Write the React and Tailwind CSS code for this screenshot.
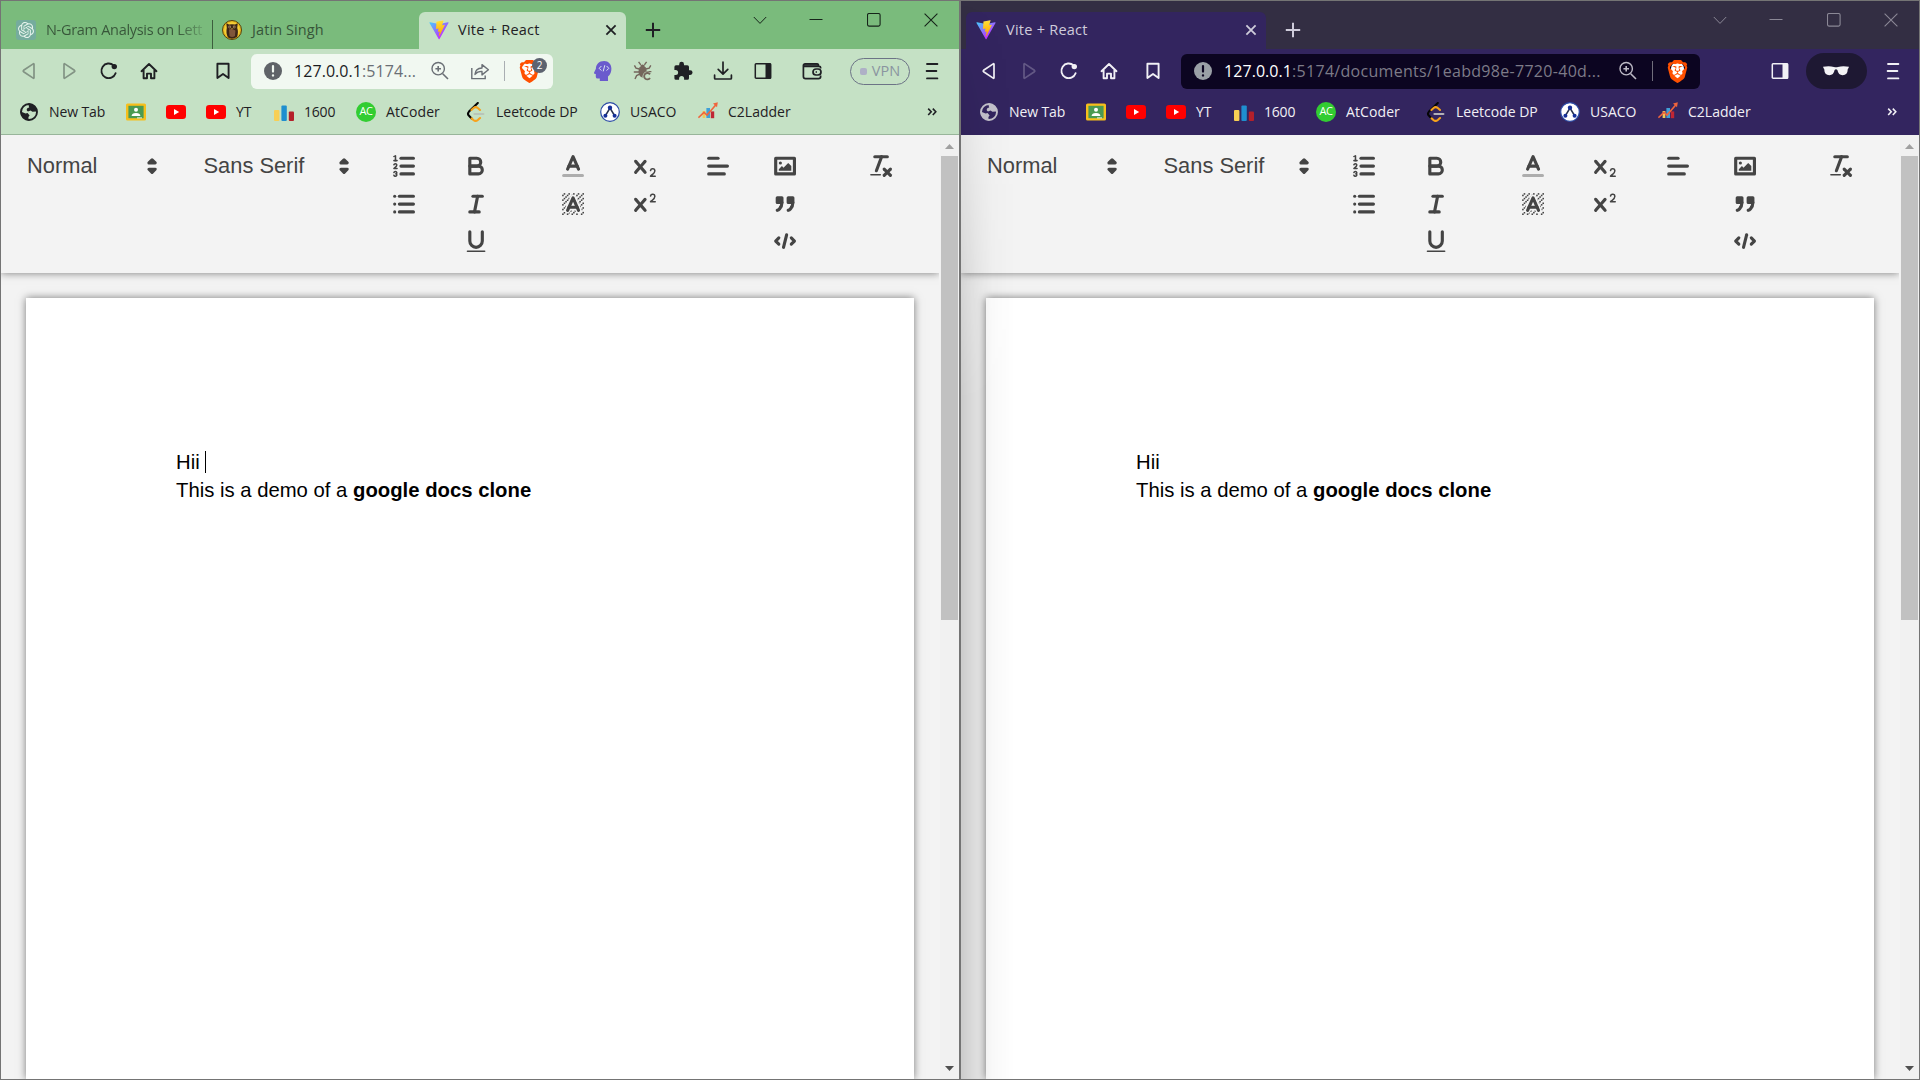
import React from "react";
import { SiOpenai, SiBrave } from "react-icons/si";

const UI = "font-['Open_Sans','Noto_Sans',sans-serif]";

/* ---------- browser chrome icons ---------- */

const Svg = ({ size = 20, vb = "0 0 20 20", children, className = "" }) => (
  <svg width={size} height={size} viewBox={vb} fill="none" className={"shrink-0 " + className}>
    {children}
  </svg>
);

const OpenAI = () => (
  <span className="flex size-5 shrink-0 items-center justify-center rounded-[3px] bg-[#75ac9d] text-[#e6f3ec]">
    <SiOpenai size={16} />
  </span>
);

const Owl = () => (
  <Svg>
    <circle cx="10" cy="10" r="9.5" fill="#e9b91c" stroke="#54400f" />
    <circle cx="10" cy="10" r="7.8" fill="#f6cf3b" />
    <path d="M4.3 3.2L7 4.6Q10 3.8 13 4.6L15.8 3.2L15.2 8Q16.8 12 15 17Q10 20 6 17.5Q3.6 13 4.8 8Z" fill="#3c2517" />
    <path d="M7 9.5Q10 8 13.4 10.5L13 16Q10 18 7.5 16Z" fill="#80563a" />
    <circle cx="7.7" cy="7" r="1.4" fill="#a8865f" />
    <circle cx="12.2" cy="7" r="1.4" fill="#a8865f" />
    <circle cx="7.7" cy="7" r=".6" fill="#120a06" />
    <circle cx="12.2" cy="7" r=".6" fill="#120a06" />
    <path d="M9.3 8L10 9.6L10.7 8Z" fill="#e2b33a" />
  </Svg>
);

const Vite = () => (
  <Svg vb="0 0 410 404">
    <defs>
      <linearGradient id="va" x1="6" y1="33" x2="235" y2="344" gradientUnits="userSpaceOnUse">
        <stop stopColor="#41D1FF" />
        <stop offset="1" stopColor="#BD34FE" />
      </linearGradient>
      <linearGradient id="vb" x1="194.65" y1="8.82" x2="236.08" y2="292.99" gradientUnits="userSpaceOnUse">
        <stop stopColor="#FFEA83" />
        <stop offset=".083" stopColor="#FFDD35" />
        <stop offset="1" stopColor="#FFA800" />
      </linearGradient>
    </defs>
    <path d="M399.641 59.5246L215.643 388.545C211.844 395.338 202.084 395.378 198.228 388.618L10.5817 59.5563C6.38087 52.1896 12.6802 43.2665 21.0281 44.7586L205.223 77.6824C206.398 77.8924 207.601 77.8904 208.776 77.6763L389.119 44.8058C397.439 43.2894 403.768 52.1434 399.641 59.5246Z" fill="url(#va)" />
    <path d="M292.965 1.5744L156.801 28.2552C154.563 28.6937 152.906 30.5903 152.771 32.8664L144.395 174.33C144.198 177.662 147.258 180.248 150.51 179.498L188.42 170.749C191.967 169.931 195.172 173.055 194.443 176.622L183.18 231.775C182.422 235.487 185.907 238.661 189.532 237.56L212.947 230.446C216.577 229.344 220.065 232.527 219.297 236.242L201.398 322.875C200.278 328.294 207.486 331.249 210.492 326.603L212.5 323.5L323.454 102.072C325.312 98.3645 322.108 94.137 318.036 94.9228L279.014 102.454C275.347 103.161 272.227 99.746 273.262 96.1583L298.731 7.86689C299.767 4.27314 296.636 0.855181 292.965 1.5744Z" fill="url(#vb)" />
  </Svg>
);

const Back = ({ dim }) => (
  <Svg className={dim ? "opacity-40" : ""}>
    <path d="M15 3.2V16.8Q15 17.6 14.2 17.1L4.6 10.7Q3.8 10 4.6 9.3L14.2 2.9Q15 2.4 15 3.2Z" stroke="currentColor" strokeWidth="1.7" strokeLinejoin="round" />
  </Svg>
);
const Forward = ({ faint }) => (
  <Svg className={"rotate-180 " + (faint ? "opacity-25" : "opacity-40")}>
    <path d="M15 3.2V16.8Q15 17.6 14.2 17.1L4.6 10.7Q3.8 10 4.6 9.3L14.2 2.9Q15 2.4 15 3.2Z" stroke="currentColor" strokeWidth="1.7" strokeLinejoin="round" />
  </Svg>
);
const Reload = () => (
  <Svg>
    <path d="M14.6 4.4A7.3 7.3 0 1 0 16.6 12.2" stroke="currentColor" strokeWidth="1.9" strokeLinecap="round" />
    <circle cx="15.3" cy="5.6" r="2.7" fill="currentColor" />
  </Svg>
);
const Home = () => (
  <Svg>
    <path d="M2.5 10.2L10 3L17.5 10.2M4.6 9V17.2H8V12.6H12V17.2H15.4V9" stroke="currentColor" strokeWidth="1.9" strokeLinecap="round" strokeLinejoin="round" />
  </Svg>
);
const Mark = () => (
  <Svg>
    <path d="M4.4 2.8H15.6V17L10 12.9L4.4 17Z" stroke="currentColor" strokeWidth="1.9" strokeLinejoin="round" />
  </Svg>
);
const Info = ({ a, b }) => (
  <Svg size={18} vb="0 0 18 18">
    <circle cx="9" cy="9" r="9" className={a} />
    <path d="M9 4V9.6" className={b} strokeWidth="2.2" strokeLinecap="round" />
    <circle cx="9" cy="13.4" r=".6" className={b} strokeWidth="1.2" />
  </Svg>
);
const ZoomIn = () => (
  <Svg>
    <path d="M12.7 12.7L18 18M8.2 4.9V10.5M5.4 7.7H11" stroke="currentColor" strokeWidth="1.6" />
    <circle cx="8.2" cy="7.7" r="6.2" stroke="currentColor" strokeWidth="1.4" />
  </Svg>
);
const Share = () => (
  <Svg>
    <path d="M1.8 7V17.6H15.2V14.5" stroke="currentColor" strokeWidth="1.4" />
    <path d="M5 13.4Q5.4 7.4 12 7V3.6L18.4 8.8L12 13.9V10.4Q7.6 10.2 5 13.4Z" stroke="currentColor" strokeWidth="1.4" strokeLinejoin="round" />
  </Svg>
);
const Brave = () => (
  <span className="flex h-[23px] w-5 shrink-0 items-center justify-center">
    <span className="flex h-[18px] w-[13px] items-center justify-center rounded-full bg-white">
      <SiBrave size={23} className="shrink-0 text-[#ff5000]" />
    </span>
  </span>
);
const Head = () => (
  <Svg>
    <path d="M11.2 0C6 0 2.9 3.4 2.9 7.8L1 11.8Q.8 12.6 1.6 12.8L2.8 13V16Q3 17.6 4.6 17.6H6.8V20H15V15.4Q18.4 12.6 18.4 7.7C18.4 3.2 15.4 0 11.2 0Z" fill="#6a5acd" />
    <path d="M8.4 5L6.2 7.3L8.4 9.6M13.6 5L15.8 7.3L13.6 9.6M11.8 4.2L10.2 10.4" stroke="#d9e4ef" strokeWidth="1" />
  </Svg>
);
const Bug = () => (
  <Svg>
    <ellipse cx="9.6" cy="10.6" rx="4.1" ry="6" fill="#74665c" />
    <path d="M7 5Q9.6 1.8 12.2 5Z" fill="#74665c" />
    <path d="M5.6 .8L7.8 3.8M13.6 .8L11.4 3.8M1.4 4.4L3 7.2L6.4 8M17.8 4.4L16.2 7.2L12.8 8M.8 11H6M18.4 10.6H13M2 18L3.6 14.6L6.6 13.2" stroke="#74665c" strokeWidth="1.4" />
    <circle cx="14.2" cy="15.2" r="4.6" fill="#c5e1c5" />
    <path d="M17 13.4A3.2 3.2 0 1 0 17 17" stroke="#74665c" strokeWidth="1.9" />
  </Svg>
);
const Puzzle = () => (
  <Svg>
    <path d="M17.2 9.2H16V6Q16 4.3 14.3 4.3H11V3.2A2.4 2.4 0 0 0 6.2 3.2V4.3H3Q1.4 4.3 1.4 6V9.1H2.6A2.5 2.5 0 0 1 2.6 14.1H1.4V17.2Q1.4 18.8 3 18.8H6.1V17.6A2.5 2.5 0 0 1 11.1 17.6V18.8H14.3Q16 18.8 16 17.2V13.9H17.2A2.35 2.35 0 0 0 17.2 9.2Z" fill="currentColor" />
  </Svg>
);
const Download = () => (
  <Svg>
    <path d="M10 1.2V13M5.2 8.4L10 13.2L14.8 8.4M1.6 14.2V17.2Q1.6 18 2.4 18H17.6Q18.4 18 18.4 17.2V14.2" stroke="currentColor" strokeWidth="1.7" strokeLinecap="round" strokeLinejoin="round" />
  </Svg>
);
const Panel = () => (
  <Svg size={18} vb="0 0 18 18">
    <rect x="1.3" y="1.8" width="15.4" height="14.4" rx=".8" stroke="currentColor" strokeWidth="1.5" />
    <path d="M11.5 1.5H17V16.5H11.5Z" fill="currentColor" />
  </Svg>
);
const Wallet = () => (
  <Svg>
    <path d="M1.2 4.5Q1.2 2.6 3 2.6H14.6Q16.5 2.6 16.8 5H1.2Z" fill="currentColor" opacity=".75" />
    <path d="M18.6 7.6V6.6Q18.6 5.4 17.2 5.4H2.8Q1.4 5.4 1.4 4.2V15.4Q1.4 17.6 3.6 17.6H16.4Q18.6 17.6 18.6 15.8V14.6M1.4 4.6Q1.4 2.8 3.4 2.8H15Q16.6 2.8 16.6 5" stroke="currentColor" strokeWidth="1.7" />
    <rect x="11" y="8" width="8" height="6" rx="3" stroke="currentColor" strokeWidth="1.7" />
    <path d="M13.6 11H15" stroke="currentColor" strokeWidth="1.4" />
  </Svg>
);
const Menu = () => (
  <Svg>
    <path d="M5 3H15.4M4.6 10H14.4M5 17.4H15.4" stroke="currentColor" strokeWidth="1.8" strokeLinecap="round" />
  </Svg>
);
const Glasses = () => (
  <svg width="26" height="10" viewBox="0 0 26 10" className="shrink-0">
    <path d="M0 .8Q6-.2 11 .9Q13 1.5 15 .9Q20-.2 26 .8L25.4 2.2L24.8 3Q24.6 9.2 19.6 9.2Q15.4 9.2 14.4 4Q13 2.4 11.6 4Q10.6 9.2 6.4 9.2Q1.4 9.2 1.2 3L.6 2.2Z" fill="#f4f3f6" />
  </svg>
);

/* ---------- bookmark icons ---------- */

const Globe = () => (
  <Svg>
    <circle cx="10" cy="10" r="8" stroke="currentColor" strokeWidth="1.9" />
    <path d="M10 1.6Q16 2 18 7.4L17 9.4L13.4 9.8L11.6 8.4L9 9.6Q6.6 8 8.6 6L10.2 5.6L9.6 3.4ZM1.6 9.4L6.6 11.4L8.6 11L10.6 13.4L9.4 15L9.6 18.4Q3 17.6 1.6 11Z" fill="currentColor" />
  </Svg>
);
const Classroom = () => (
  <Svg>
    <rect y="1.4" width="20" height="17.2" rx="1.6" fill="#f6bf1c" />
    <rect x="2.4" y="3.8" width="15.2" height="12.4" fill="#4b9a52" />
    <circle cx="10" cy="7.8" r="2" fill="#fff" />
    <path d="M5.6 14Q5.8 11 10 11Q14.2 11 14.4 14Z" fill="#fff" />
    <path d="M11 15.4H16V16.4H11Z" fill="#e9f2ea" />
  </Svg>
);
const YouTube = () => (
  <Svg>
    <rect y="3" width="20" height="14" rx="3.2" fill="#f00" />
    <path d="M8 7L13.2 10L8 13Z" fill="#fff" />
  </Svg>
);
const Bars = () => (
  <Svg className="overflow-visible">
    <rect x="0" y="8" width="5.4" height="11" rx="1" fill="#f8cf54" />
    <rect x="7.4" y="3.4" width="5.4" height="15.6" rx="1" fill="#1f8fcf" />
    <rect x="14.8" y="9.6" width="5.2" height="9.4" rx="1" fill="#b4202a" />
  </Svg>
);
const AtCoderIcon = () => (
  <span className="flex size-5 shrink-0 items-center justify-center rounded-full bg-[#32cd32] text-[11px] tracking-[-0.5px] text-white">AC</span>
);
const Leet = ({ bar }) => (
  <Svg>
    <path d="M11.8 1L3 9.6Q1 11.8 3 13.8L5.6 16.4" stroke="#050505" strokeWidth="2.1" strokeLinecap="round" />
    <path d="M5.6 16.4L7.4 18Q9.6 19.8 11.8 18L14 16" stroke="#f7a21b" strokeWidth="2.1" strokeLinecap="round" />
    <path d="M5.4 8L7.6 6Q9.6 4.4 11.8 6L14 8" stroke="#f7a21b" strokeWidth="2.1" strokeLinecap="round" />
    <path d="M8.4 12H17.4" className={bar} strokeWidth="2.1" strokeLinecap="round" />
  </Svg>
);
const Usaco = () => (
  <Svg>
    <circle cx="10" cy="10" r="9.3" fill="#fff" stroke="#2b4ba6" strokeWidth="1.2" />
    <path d="M5.2 14L10 6L14.8 14" stroke="#27324f" strokeWidth="1.5" />
    <circle cx="10" cy="5.8" r="2.2" fill="#15309a" />
    <circle cx="5.4" cy="13.8" r="2" fill="#15309a" />
    <circle cx="14.6" cy="13.8" r="2" fill="#15309a" />
  </Svg>
);
const C2 = () => (
  <Svg>
    <rect x="4.6" y="9" width="2.8" height="7" fill="#efc85a" />
    <rect x="8.4" y="6" width="3.6" height="10" fill="#3fa0d8" />
    <rect x="12.8" y="9.4" width="3.4" height="6.8" fill="#c02634" />
    <path d="M.4 15.6L6 10.4L9 13L18.6 2" stroke="#f0643c" strokeWidth="1.6" />
    <path d="M15 1.6L19.8.2L19 5.2Z" fill="#f0643c" />
  </Svg>
);

const Cell = ({ children, className = "" }) => (
  <button className={"flex h-9 w-10 shrink-0 items-center justify-center " + className}>{children}</button>
);

const BM = ({ w, icon, label, t = "" }) => (
  <div className={"flex shrink-0 items-center gap-2.5 whitespace-nowrap " + w}>
    {icon}
    {label && <span className={t}>{label}</span>}
  </div>
);

function Bookmarks({ dark }) {
  return (
    <div className="flex h-[45px] shrink-0 items-center pl-[18px] text-[14px]">
      <BM w="w-[107px]" icon={<span className={dark ? "text-[#c3c1cb]" : "text-[#1f2024]"}><Globe /></span>} label="New Tab" t="tracking-[-0.1px]" />
      <BM w="w-10" icon={<Classroom />} />
      <BM w="w-10" icon={<YouTube />} />
      <BM w="w-[68px]" icon={<YouTube />} label="YT" />
      <BM w="w-[82px]" icon={<Bars />} label="1600" t="tracking-[-0.2px]" />
      <BM w="w-[110px]" icon={<AtCoderIcon />} label="AtCoder" t="tracking-[0.1px]" />
      <BM w="w-[134px]" icon={<Leet bar={dark ? "stroke-[#b3b1b8]" : "stroke-[#b9c4b9]"} />} label="Leetcode DP" />
      <BM w="w-[98px]" icon={<Usaco />} label="USACO" />
      <BM w="w-[200px]" icon={<C2 />} label="C2Ladder" />
      <Svg size={12} vb="0 0 12 12" className="ml-[28px]">
        <path d="M2.2 2.6L5.2 5.8L2.2 9M6.8 2.6L9.8 5.8L6.8 9" stroke="currentColor" strokeWidth="1.6" />
      </Svg>
    </div>
  );
}

const TabClose = () => (
  <Svg size={12} vb="0 0 12 12">
    <path d="M1.4 1.4L10.6 10.6M10.6 1.4L1.4 10.6" stroke="currentColor" strokeWidth="1.8" />
  </Svg>
);
const Plus = () => (
  <Svg size={16} vb="0 0 16 16" className="mt-[10px] self-center">
    <path d="M8 .8V15.2M.8 8H15.2" stroke="currentColor" strokeWidth="2" />
  </Svg>
);

const Controls = ({ tone }) => (
  <div className={"mr-[21px] ml-auto flex h-[38px] items-center " + tone}>
    <Svg size={14} vb="0 0 14 14" className="mr-[42px]"><path d="M.8 4L7 10.4L13.2 4" stroke="currentColor" /></Svg>
    <Svg size={14} vb="0 0 14 14" className="mr-[44px]"><path d="M.5 6.5H13.5" stroke="currentColor" /></Svg>
    <Svg size={14} vb="0 0 14 14" className="mr-[43px]"><rect x=".5" y=".5" width="12.6" height="12.6" rx="1.6" stroke="currentColor" strokeWidth="1.1" /></Svg>
    <Svg size={14} vb="0 0 14 14"><path d="M.6 .6L13.4 13.4M13.4 .6L.6 13.4" stroke="currentColor" strokeWidth="1.1" /></Svg>
  </div>
);

/* ---------- editor toolbar icons, 18-unit grid ---------- */

const Q = ({ children }) => (
  <svg viewBox="0 0 18 18" className="block size-[28.125px] fill-none stroke-[#444] stroke-2" strokeLinecap="round" strokeLinejoin="round">
    {children}
  </svg>
);
const F = { fill: "#444", stroke: "none" };
const L = ({ p, ...r }) => <line x1={p[0]} y1={p[1]} x2={p[2]} y2={p[3]} {...r} />;

const Ordered = () => (
  <Q>
    <L p={[7, 4, 15, 4]} /><L p={[7, 9, 15, 9]} /><L p={[7, 14, 15, 14]} />
    <L p={[2.5, 5.5, 4.5, 5.5]} className="stroke-1" />
    <path style={F} d="M3.5,6A0.5,0.5,0,0,1,3,5.5V3.085l-0.276.138A0.5,0.5,0,0,1,2.053,3c-0.124-.247-0.023-0.324.224-0.447l1-.5A0.5,0.5,0,0,1,4,2.5v3A0.5,0.5,0,0,1,3.5,6Z" />
    <path className="stroke-1" d="M4.5,10.5h-2c0-.234,1.85-1.076,1.85-2.234A0.959,0.959,0,0,0,2.5,8.156" />
    <path className="stroke-1" d="M2.5,14.846a0.959,0.959,0,0,0,1.85-.109A0.7,0.7,0,0,0,3.75,14a0.688,0.688,0,0,0,.6-0.736,0.959,0.959,0,0,0-1.85-.109" />
  </Q>
);
const Bullet = () => (
  <Q>
    {[4, 9, 14].map((y) => (
      <g key={y}><L p={[6, y, 15, y]} /><L p={[3, y, 3, y]} /></g>
    ))}
  </Q>
);
const Bold = () => (
  <Q>
    <path d="M5,4H9.5A2.5,2.5,0,0,1,12,6.5v0A2.5,2.5,0,0,1,9.5,9H5V4Z" />
    <path d="M5,9h5.5A2.5,2.5,0,0,1,13,11.5v0A2.5,2.5,0,0,1,10.5,14H5V9Z" />
  </Q>
);
const Italic = () => <Q><L p={[7, 4, 13, 4]} /><L p={[5, 14, 11, 14]} /><L p={[8, 14, 10, 4]} /></Q>;
const Underline = () => (
  <Q>
    <path d="M5,3V9a4.012,4.012,0,0,0,4,4H9a4.012,4.012,0,0,0,4-4V3" />
    <rect style={F} height="1" rx=".5" width="12" x="3" y="15" />
  </Q>
);
const Color = () => (
  <Q>
    <L p={[3, 15, 15, 15]} opacity=".4" />
    <polyline points="5.5 11 9 3 12.5 11" />
    <L p={[11.63, 9, 6.38, 9]} />
  </Q>
);
const dots = [[4, 4], [2, 6], [3, 5], [4, 7], [2, 12], [2, 9], [2, 15], [3, 8], [12, 2], [11, 3], [2, 3], [6, 2], [3, 2], [5, 3], [9, 2], [15, 14], [13, 7], [15, 5], [14, 6], [15, 8], [14, 9], [14, 3], [15, 2], [12, 5], [13, 4], [9, 14], [8, 15], [5, 15], [11, 15], [14, 15], [15, 11]];
const Highlight = () => (
  <Q>
    <g style={F}>
      {dots.map(([x, y]) => <rect key={x + "-" + y} x={x} y={y} width="1" height="1" />)}
      <polygon points="6 6.868 6 6 5 6 5 7 5.942 7 6 6.868" />
      <polygon points="6.817 5 6 5 6 6 6.38 6 6.817 5" />
      <polygon points="4 11.439 4 11 3 11 3 12 3.755 12 4 11.439" />
      <polygon points="4.63 10 4 10 4 11 4.192 11 4.63 10" />
      <path d="M10.832,4.2L11,4.582V4H10.708A1.948,1.948,0,0,1,10.832,4.2Z" />
      <path d="M7,4.582L7.168,4.2A1.929,1.929,0,0,1,7.292,4H7V4.582Z" />
      <path d="M8,13H7.683l-0.351.8a1.933,1.933,0,0,1-.124.2H8V13Z" />
      <path d="M9,3H8V3.282A1.985,1.985,0,0,1,9,3Z" />
      <polygon points="13.447 10.174 13.808 11 14 11 14 10 13.37 10 13.447 10.174" />
      <path d="M3.775,14H3v1H4V14.314A1.97,1.97,0,0,1,3.775,14Z" />
      <polygon points="12 6.868 12 6 11.62 6 12 6.868" />
      <polygon points="12.933 9 13 9 13 8 12.495 8 12.933 9" />
      <path d="M6,14.926V15H7V14.316A1.993,1.993,0,0,1,6,14.926Z" />
      <path d="M10.668,13.8L10.317,13H10v1h0.792A1.947,1.947,0,0,1,10.668,13.8Z" />
      <path d="M14.332,12.2a1.99,1.99,0,0,1,.166.8H15V12H14.245Z" />
    </g>
    <polyline points="5.5 13 9 5 12.5 13" />
    <L p={[11.63, 11, 6.38, 11]} />
  </Q>
);
const BigX = "M9.65,5.241a1,1,0,0,0-1.409.108L6,7.964,3.759,5.349A1,1,0,0,0,2.192,6.59178Q2.21541,6.6213,2.241,6.649L4.684,9.5,2.241,12.35A1,1,0,0,0,3.71,13.70722q0.02557-.02768.049-0.05722L6,11.036,8.241,13.65a1,1,0,1,0,1.567-1.24277Q9.78459,12.3777,9.759,12.35L7.316,9.5,9.759,6.651A1,1,0,0,0,9.65,5.241Z";
const Sub = () => (
  <Q>
    <path style={F} d="M15.5,15H13.861a3.858,3.858,0,0,0,1.914-2.975,1.8,1.8,0,0,0-1.6-1.751A1.921,1.921,0,0,0,12.021,11.7a0.50013,0.50013,0,1,0,.957.291h0a0.914,0.914,0,0,1,1.053-.725,0.81,0.81,0,0,1,.744.762c0,1.076-1.16971,1.86982-1.93971,2.43082A1.45639,1.45639,0,0,0,12,15.5a0.5,0.5,0,0,0,.5.5h3A0.5,0.5,0,0,0,15.5,15Z" />
    <path style={F} d={BigX} />
  </Q>
);
const Sup = () => (
  <Q>
    <path style={F} d="M15.5,7H13.861a4.015,4.015,0,0,0,1.914-2.975,1.8,1.8,0,0,0-1.6-1.751A1.922,1.922,0,0,0,12.021,3.7a0.5,0.5,0,1,0,.957.291,0.917,0.917,0,0,1,1.053-.725,0.81,0.81,0,0,1,.744.762c0,1.077-1.164,1.925-1.934,2.486A1.423,1.423,0,0,0,12,7.5a0.5,0.5,0,0,0,.5.5h3A0.5,0.5,0,0,0,15.5,7Z" />
    <path style={F} d={BigX} />
  </Q>
);
const Align = () => <Q><L p={[3, 9, 15, 9]} /><L p={[3, 14, 13, 14]} /><L p={[3, 4, 9, 4]} /></Q>;
const Image = () => (
  <Q>
    <rect height="10" width="12" x="3" y="4" />
    <circle style={F} cx="6" cy="7" r="1" />
    <polyline style={F} points="5 12 5 11 7 9 8 10 11 7 13 9 13 12 5 12" />
  </Q>
);
const Quote = () => (
  <Q>
    <g fill="#444">
      <rect height="3" width="3" x="4" y="5" />
      <rect height="3" width="3" x="11" y="5" />
      <path d="M7,8c0,4.031-3,5-3,5" />
      <path d="M14,8c0,4.031-3,5-3,5" />
    </g>
  </Q>
);
const Code = () => (
  <Q>
    <polyline points="5 7 3 9 5 11" />
    <polyline points="13 7 15 9 13 11" />
    <L p={[10, 5, 8, 13]} />
  </Q>
);
const Clean = () => (
  <Q>
    <L p={[5, 3, 13, 3]} /><L p={[6, 12, 9.35, 3]} /><L p={[11, 11, 15, 15]} /><L p={[15, 11, 11, 15]} />
    <rect style={F} height="1" rx=".5" width="7" x="2" y="14" />
  </Q>
);
const Arrows = () => (
  <Q>
    <polygon points="7 11 9 13 11 11 7 11" />
    <polygon points="7 7 9 5 11 7 7 7" />
  </Q>
);

const Group = ({ className = "", icons }) => (
  <div className={"flex w-[43.75px] shrink-0 flex-col " + className}>
    {icons.map((I, i) => (
      <button key={i} className="flex h-[37.5px] items-center justify-center"><I /></button>
    ))}
  </div>
);
const Picker = ({ label, className }) => (
  <div className={"flex h-[37.5px] shrink-0 justify-between pt-[4px] pl-[13.5px] text-[21.875px] text-[#444] " + className}>
    <span className="leading-[28px]">{label}</span>
    <Arrows />
  </div>
);

function Editor({ caret }) {
  return (
    <div className="flex min-h-0 grow bg-[#f3f3f3] font-['Liberation_Sans',Arial,sans-serif]">
      <div className="flex min-w-0 grow flex-col overflow-hidden">
        <div className="z-10 flex h-[138px] shrink-0 bg-[#f3f3f3] pt-[12.5px] pl-[12.5px] shadow-[0_0_8px_0_rgba(0,0,0,0.5)]">
          <Picker label="Normal" className="w-[152.7px]" />
          <Picker label="Sans Serif" className="ml-[23.8px] w-[168px]" />
          <Group className="ml-[23.8px]" icons={[Ordered, Bullet]} />
          <Group className="ml-[28.8px]" icons={[Bold, Italic, Underline]} />
          <Group className="ml-[52.7px]" icons={[Color, Highlight]} />
          <Group className="ml-[28.3px]" icons={[Sub, Sup]} />
          <Group className="ml-[29.2px]" icons={[Align]} />
          <Group className="ml-[23.4px]" icons={[Image, Quote, Code]} />
          <Group className="ml-[52.3px]" icons={[Clean]} />
        </div>
        <div className="mt-[25px] ml-[25px] w-[888px] grow bg-white px-[150px] pt-[150px] text-[20.3px] leading-[28.4px] text-black shadow-[0_0_8px_0_rgba(0,0,0,0.5)]">
          <p className="flex items-center">
            <span>Hii</span>
            {caret && <span className="ml-[5px] h-[22px] w-px bg-black" />}
          </p>
          <p>This is a demo of a <b className="tracking-[0.01px]">google docs clone</b></p>
        </div>
      </div>
      <div className="ml-px flex w-[19px] shrink-0 flex-col items-center bg-[#f1f1f1]">
        <svg width="9" height="5" viewBox="0 0 9 5" className="mt-[9px] mb-[7px] shrink-0"><path d="M0 5L4.5 0L9 5Z" fill="#a0a0a0" /></svg>
        <div className="h-[464px] w-[17px] bg-[#c1c1c1]" />
        <svg width="9" height="5" viewBox="0 0 9 5" className="mt-auto mb-[8px] shrink-0"><path d="M0 0L4.5 5L9 0Z" fill="#505050" /></svg>
      </div>
    </div>
  );
}

const frame = "relative flex h-full w-[960px] shrink-0 flex-col overflow-hidden border border-[#747474] ";

function LightWindow() {
  return (
    <div className={frame + "bg-[#c5e1c5] text-[#1f2024] " + UI}>
      <div className="flex h-12 shrink-0 items-end bg-[#7abb7c] text-[14.5px]">
        <div className="flex h-[29px] w-[212px] shrink-0 items-start gap-2.5 overflow-hidden border-r border-[#3d5e3e] pl-[15px] whitespace-nowrap">
          <OpenAI />
          <span className="w-[164px] overflow-hidden bg-gradient-to-r from-[#375539] from-80% to-[#7abb7c] bg-clip-text leading-5 tracking-[-0.3px] text-transparent">N-Gram Analysis on Lett</span>
        </div>
        <div className="flex h-[29px] w-[206px] shrink-0 items-start gap-2.5 pl-[9px] text-[#375539]">
          <Owl />
          <span className="leading-5 tracking-[0.1px]">Jatin Singh</span>
        </div>
        <div className="flex h-[37px] w-[207px] shrink-0 items-center rounded-t-md bg-[#c5e1c5] pr-[9px] pb-px pl-[10px]">
          <Vite />
          <span className="ml-[9px] font-medium tracking-[0.25px]">Vite + React</span>
          <span className="ml-auto"><TabClose /></span>
        </div>
        <div className="ml-[19px] flex h-full"><Plus /></div>
        <div className="ml-auto self-start"><Controls tone="text-[#16241a]" /></div>
      </div>
      <div className="flex h-10 shrink-0 items-center pt-[4px] pl-[7.5px]">
        <Cell><Back dim /></Cell>
        <Cell><Forward /></Cell>
        <Cell><Reload /></Cell>
        <Cell><Home /></Cell>
        <Cell className="ml-[34.5px]"><Mark /></Cell>
        <div className="ml-[8px] flex h-[35px] w-[302px] shrink-0 items-center rounded-md bg-[#f1f8f1] pl-[13px] text-[16px] text-[#6a6f75]">
          <Info a="fill-[#5f6368]" b="stroke-[#f1f8f1]" />
          <span className="ml-3 w-[126px] tracking-[0.06px] whitespace-nowrap"><span className="text-[#1b1c1f]">127.0.0.1</span>:5174...</span>
          <Cell><ZoomIn /></Cell>
          <Cell><Share /></Cell>
          <span className="ml-[4px] h-5 w-px shrink-0 bg-[#a9aeb2]" />
          <span className="relative ml-[14px]">
            <Brave />
            <span className="absolute -top-0.5 left-[13px] flex size-[15px] items-center justify-center rounded-full bg-[#5d6370] text-[10px] text-white">2</span>
          </span>
        </div>
        <Cell className="ml-[30px]"><Head /></Cell>
        <Cell><Bug /></Cell>
        <Cell><Puzzle /></Cell>
        <Cell><Download /></Cell>
        <Cell><Panel /></Cell>
        <Cell className="ml-[9px]"><Wallet /></Cell>
        <div className="ml-[18px] flex h-[27px] w-[60px] shrink-0 items-center justify-center gap-[5px] rounded-full border border-[#6c7386] text-[14.5px] text-[#8a94a0]">
          <span className="size-[7px] rounded-xs bg-[#aeb0c6]" />VPN
        </div>
        <Cell className="ml-[2px]"><Menu /></Cell>
      </div>
      <div className="border-b border-[#98b59a]"><Bookmarks /></div>
      <Editor caret />
    </div>
  );
}

function DarkWindow() {
  return (
    <div className={frame + "bg-[#33255f] text-[#f1f0f5] " + UI}>
      <div className="flex h-12 shrink-0 items-end bg-[#332e43] text-[14.5px] text-[#cfccdb]">
        <div className="ml-[5px] flex h-[37px] w-[300px] shrink-0 items-center rounded-t-md bg-[#33255f] pr-[9px] pb-px pl-[10px]">
          <Vite />
          <span className="ml-[10px] font-medium tracking-[0.25px]">Vite + React</span>
          <span className="ml-auto"><TabClose /></span>
        </div>
        <div className="ml-[19px] flex h-full"><Plus /></div>
        <div className="ml-auto self-start"><Controls tone="text-[#8b8896]" /></div>
      </div>
      <div className="flex h-10 shrink-0 items-center pt-[4px] pl-[7.5px]">
        <Cell><Back /></Cell>
        <Cell><Forward faint /></Cell>
        <Cell><Reload /></Cell>
        <Cell><Home /></Cell>
        <Cell className="ml-[4.5px]"><Mark /></Cell>
        <div className="ml-[8px] flex h-[35px] w-[519px] shrink-0 items-center rounded-md bg-[#0c0521] pl-[13px] text-[16px] text-[#7d7b88]">
          <Info a="fill-[#9aa0a6]" b="stroke-[#0c0521]" />
          <span className="ml-3 w-[384px] tracking-[0.3px] whitespace-nowrap"><span className="tracking-[0.06px] text-white">127.0.0.1</span>:5174/documents/1eabd98e-7720-40d...</span>
          <span className="text-[#bdbac6]"><Cell><ZoomIn /></Cell></span>
          <span className="ml-[4px] h-5 w-px shrink-0 bg-[#716e7c]" />
          <span className="ml-[14px]"><Brave /></span>
        </div>
        <Cell className="ml-[59.5px]"><Panel /></Cell>
        <div className="ml-[6.5px] flex h-9 w-[60.5px] shrink-0 items-center justify-center rounded-full bg-[#1e1833]"><Glasses /></div>
        <Cell className="ml-[6px]"><Menu /></Cell>
      </div>
      <div className="h-[46px] shrink-0"><Bookmarks dark /></div>
      <Editor />
      <div className="pointer-events-none absolute inset-y-0 left-0 z-20 w-[60px] bg-[linear-gradient(90deg,rgba(0,0,0,.16),rgba(0,0,0,.08)_16px,rgba(0,0,0,.025)_32px,transparent_54px)] [mask-image:linear-gradient(180deg,transparent,rgba(0,0,0,.4)_140px,#000_400px)]" />
    </div>
  );
}

export default function App() {
  return (
    <div className="flex h-[1080px] w-[1920px] overflow-hidden">
      <LightWindow />
      <DarkWindow />
    </div>
  );
}
